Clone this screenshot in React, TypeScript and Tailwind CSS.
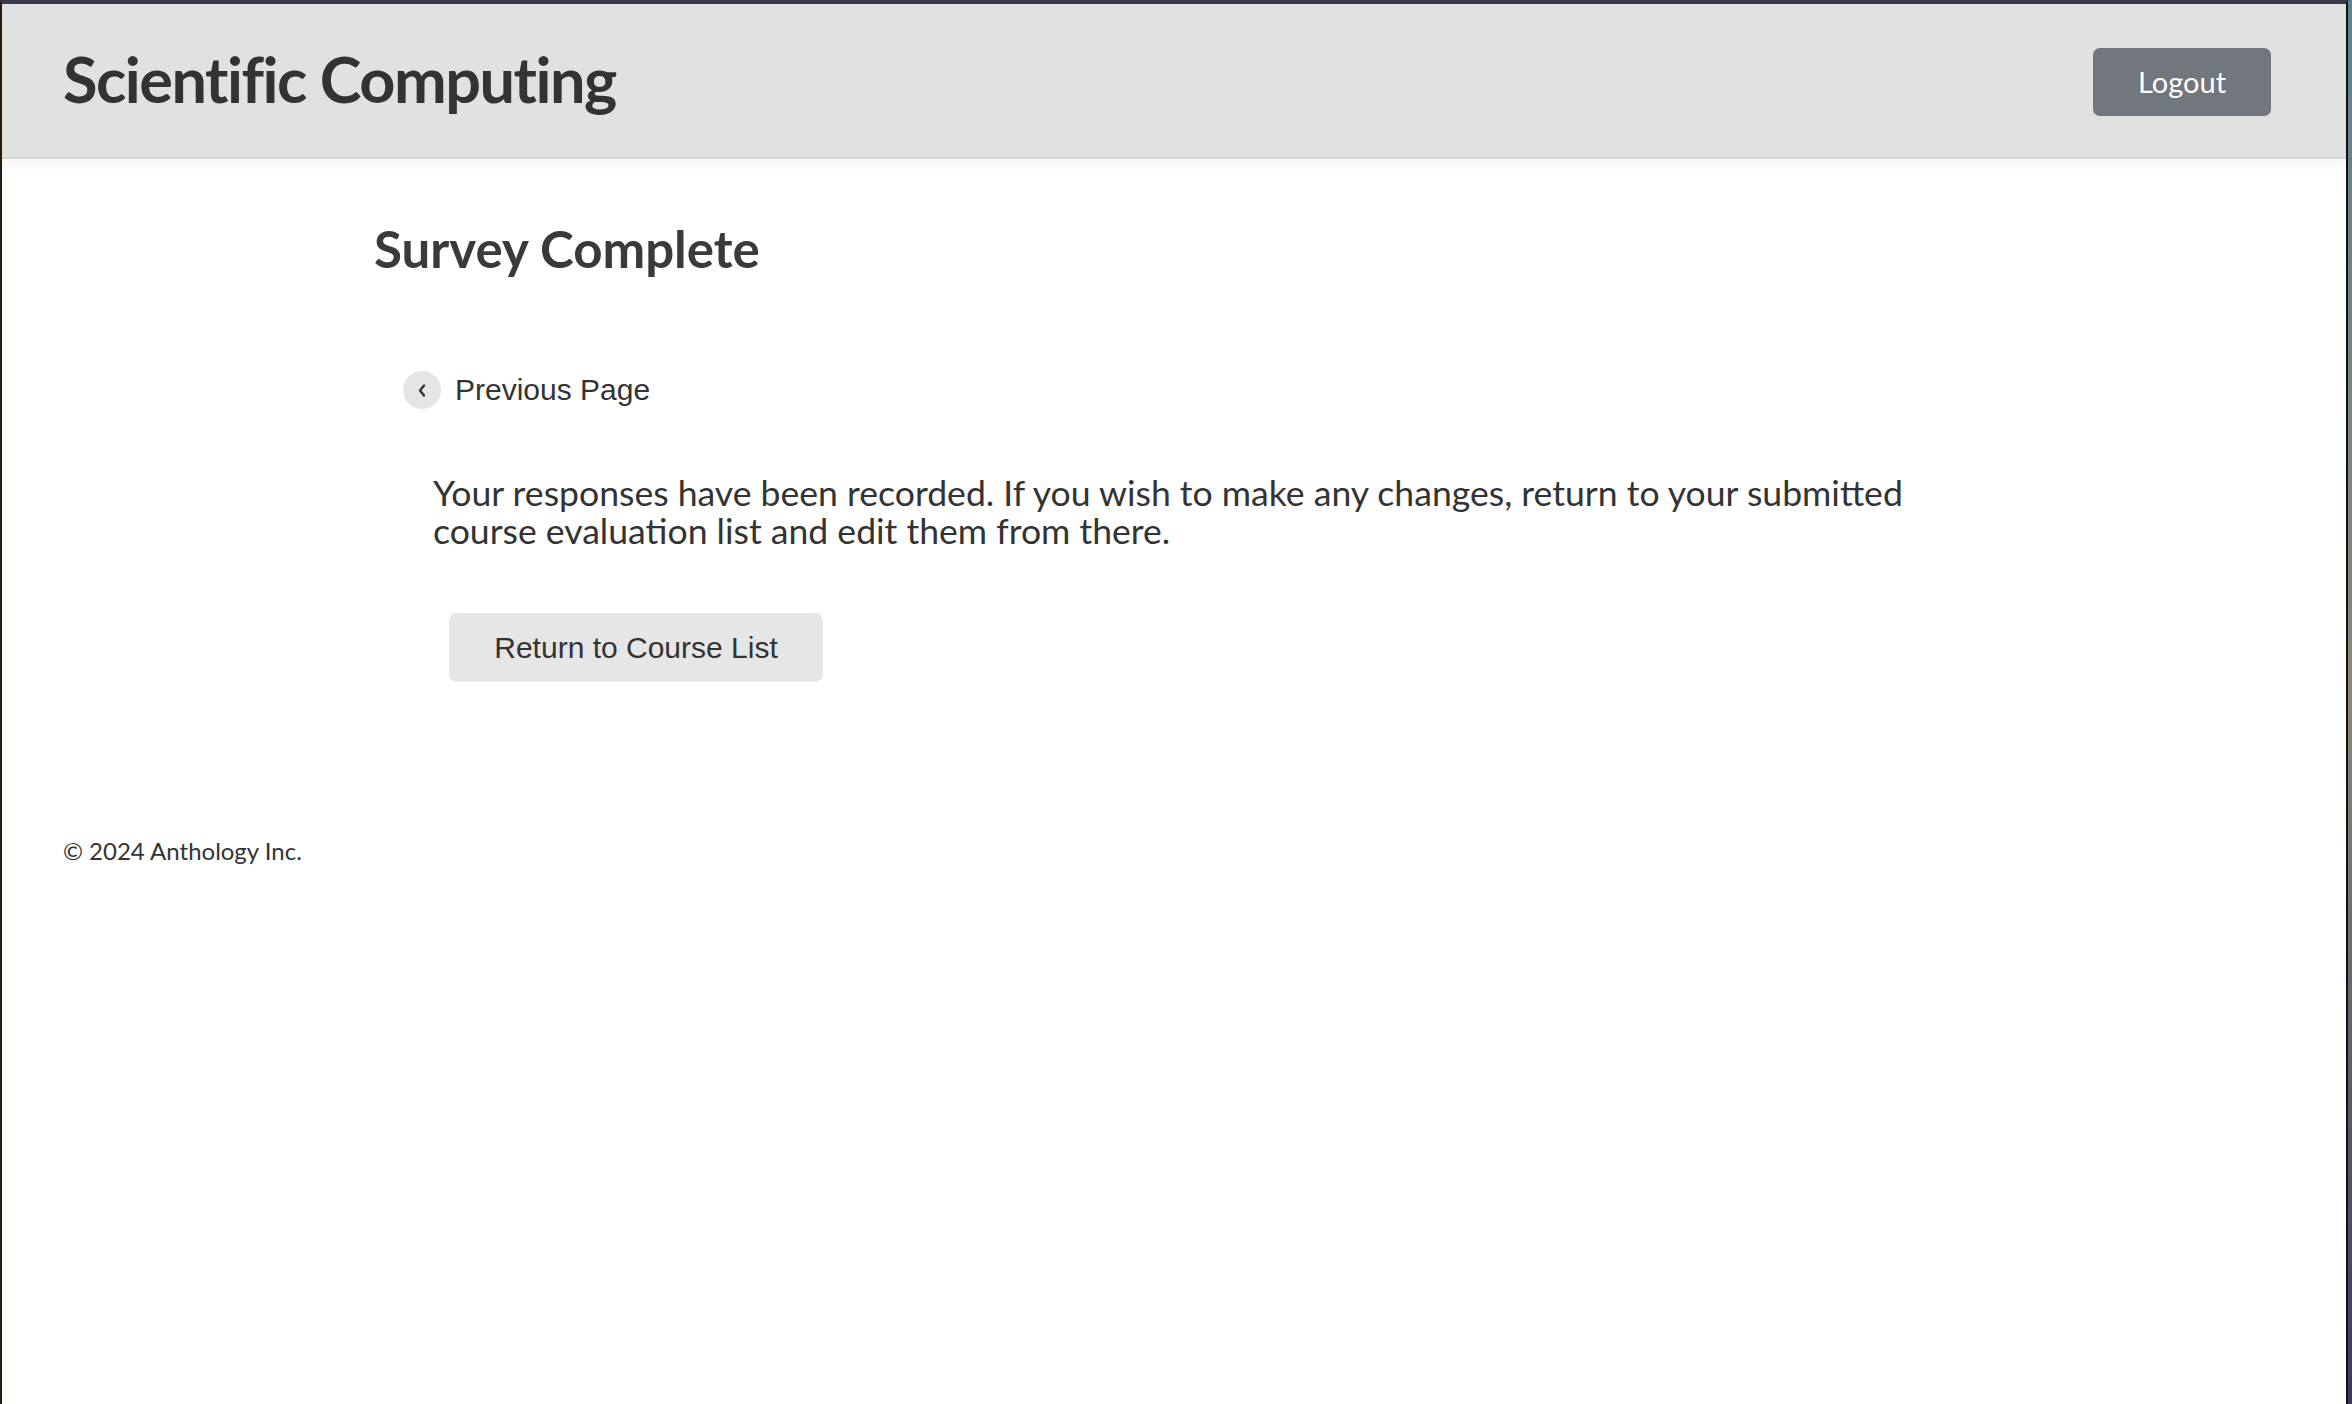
import React from 'react';

const sans = "font-['Lato','Noto_Sans',sans-serif]";
const arial = "font-['Liberation_Sans','Arial',sans-serif]";

function ChevronLeft() {
  return (
    <svg viewBox="0 0 10 14" className="h-[15px] w-[10px]" fill="none">
      <path d="M7 2 L3 7 L7 12" stroke="#333" strokeWidth="2.4" strokeLinecap="round" strokeLinejoin="round" />
    </svg>
  );
}

export default function App() {
  return (
    <div className="flex min-h-screen w-full bg-[#2b2230]">
      {/* browser window */}
      <div className="flex min-h-screen flex-1 flex-col border-t-[4px] border-l-2 border-r-2 border-t-[#3b3947] border-l-[#2a1a14] border-r-[#111] bg-white">
        <header className="flex h-[155px] items-center justify-between border-b-2 border-[#d4d5d5] bg-[#e0e1e1] pl-[61px] pr-[75px] shadow-[0_6px_10px_rgba(0,0,0,0.04)]">
          <h1 className={`${sans} pb-[4px] text-[63px] font-bold leading-none tracking-[-1.5px] text-[#333]`}>
            Scientific Computing
          </h1>
          <button className={`${sans} mt-[2px] flex h-[68px] w-[178px] items-center justify-center rounded-[7px] bg-[#72767d] text-[29px] text-white`}>
            Logout
          </button>
        </header>

        <main className="ml-[372px] flex flex-col items-start">
          <h2 className={`${sans} mt-[64px] text-[51px] font-bold leading-none text-[#3a3a3a]`}>
            Survey Complete
          </h2>

          <a className="ml-[29px] mt-[97px] flex items-center gap-[14px] text-[#333]">
            <span className="flex h-[38px] w-[38px] items-center justify-center rounded-full bg-[#e5e5e5]">
              <ChevronLeft />
            </span>
            <span className={`${arial} text-[30px] leading-none`}>Previous Page</span>
          </a>

          <p className={`${sans} ml-[59px] mt-[65px] w-[1540px] text-[35.6px] leading-[38px] text-[#333]`}>
            Your responses have been recorded. If you wish to make any changes, return to your submitted course evaluation list and edit them from there.
          </p>

          <button className={`${arial} ml-[75px] mt-[63px] flex h-[69px] w-[374px] items-center justify-center rounded-[8px] bg-[#e6e6e6] text-[30px] text-[#333]`}>
            Return to Course List
          </button>
        </main>

        <footer className={`${sans} ml-[61px] mt-[157px] text-[24px] leading-none text-[#333]`}>
          © 2024 Anthology Inc.
        </footer>
      </div>
      {/* desktop showing beside the window */}
      <div className="w-[4px] bg-gradient-to-b from-[#5f7f90] via-[#8c8679] to-[#3c3a5a]" />
    </div>
  );
}
